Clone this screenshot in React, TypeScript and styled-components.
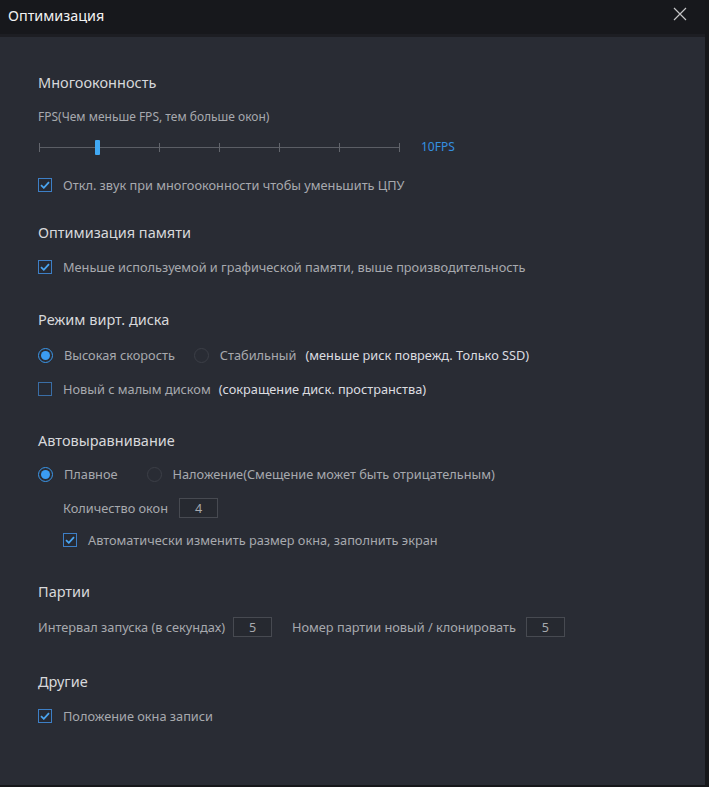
import React from "react";
import styled, { createGlobalStyle } from "styled-components";

const Global = createGlobalStyle`
  html, body { margin: 0; padding: 0; background: #16171a; }
  body { font-family: "Noto Sans", "Open Sans", sans-serif; }
  * { box-sizing: border-box; }
`;

const Window = styled.div`
  width: 705px;
  height: 785px;
  background: #292c34;
  display: flex;
  flex-direction: column;
`;

const TitleBar = styled.div`
  height: 37px;
  flex: none;
  background: #17181c;
  border-bottom: 3px solid #1d1e23;
  display: flex;
  align-items: center;
  justify-content: space-between;
  padding: 0 18px 2px 8px;
`;

const Title = styled.span`
  color: #f2f2f2;
  font-size: 14.4px;
  line-height: 20px;
`;

const CloseBtn = styled.div`
  width: 14px;
  height: 14px;
  display: flex;
  margin-top: -4px;
`;

const Content = styled.div`
  padding: 35px 0 0 38px;
  display: flex;
  flex-direction: column;
`;

const Section = styled.section<{ $top?: number }>`
  margin-top: ${(p) => p.$top ?? 0}px;
  display: flex;
  flex-direction: column;
`;

const Heading = styled.h3`
  margin: 0;
  font-weight: 400;
  font-size: 14.5px;
  line-height: 20px;
  color: #d7d8db;
`;

const Rows = styled.div<{ $gap?: number; $top?: number }>`
  display: flex;
  flex-direction: column;
  gap: ${(p) => p.$gap ?? 14}px;
  margin-top: ${(p) => p.$top ?? 14}px;
`;

const Row = styled.div<{ $indent?: number; $gap?: number }>`
  display: flex;
  align-items: center;
  height: 20px;
  padding-left: ${(p) => p.$indent ?? 0}px;
  gap: ${(p) => p.$gap ?? 0}px;
`;

const Label = styled.span<{ $bright?: boolean; $small?: boolean }>`
  font-size: ${(p) => (p.$small ? 12 : 12.75)}px;
  line-height: 20px;
  color: ${(p) => (p.$bright ? "#dcdde0" : "#a7a9ae")};
  white-space: nowrap;
`;

const Option = styled.label<{ $gap?: number }>`
  display: flex;
  align-items: center;
  gap: 11px;
  margin-right: ${(p) => p.$gap ?? 0}px;
`;

const Box = styled.span<{ $checked?: boolean }>`
  width: 14px;
  height: 14px;
  flex: none;
  border: 1px solid ${(p) => (p.$checked ? "#3d7fc6" : "#3a6ea6")};
  background: #262a33;
  display: flex;
  align-items: center;
  justify-content: center;
`;

const Radio = styled.span<{ $checked?: boolean }>`
  width: 15px;
  height: 15px;
  flex: none;
  border-radius: 50%;
  border: ${(p) => (p.$checked ? "1.5px solid #3a97ea" : "1px solid #3c3f47")};
  display: flex;
  align-items: center;
  justify-content: center;
  &::after {
    content: "";
    width: 9px;
    height: 9px;
    border-radius: 50%;
    background: ${(p) => (p.$checked ? "#3b9cf1" : "transparent")};
  }
`;

const NumBox = styled.span<{ $left?: number; $right?: number }>`
  width: 39px;
  height: 20px;
  flex: none;
  margin-left: ${(p) => p.$left ?? 0}px;
  margin-right: ${(p) => p.$right ?? 0}px;
  border: 1px solid #474a51;
  background: #262930;
  color: #a7a9ae;
  font-size: 12.6px;
  display: flex;
  align-items: center;
  justify-content: center;
`;

const SliderRow = styled.div`
  display: flex;
  align-items: center;
  height: 20px;
  margin-top: 10px;
  gap: 21px;
`;

const Track = styled.div`
  position: relative;
  width: 361px;
  height: 20px;
  margin-left: 1px;
`;

const Line = styled.div`
  position: absolute;
  left: 0;
  right: 0;
  top: 10px;
  height: 1px;
  background: #5b5e65;
`;

const Tick = styled.div`
  position: absolute;
  top: 6px;
  width: 1px;
  height: 9px;
  background: #62656c;
`;

const Thumb = styled.div`
  position: absolute;
  top: 3px;
  left: 56px;
  width: 5px;
  height: 15px;
  border-radius: 1px;
  background: #41a9f4;
`;

const FpsValue = styled.span`
  font-size: 12px;
  color: #3490e0;
  line-height: 20px;
`;

const Check = () => (
  <svg width="10" height="8" viewBox="0 0 10 8">
    <path d="M1 4.2 L3.8 6.8 L9 1.2" fill="none" stroke="#4aa4ef" strokeWidth="1.8" />
  </svg>
);

const CheckOpt = ({ checked, children }: { checked?: boolean; children: React.ReactNode }) => (
  <Option>
    <Box $checked={checked}>{checked && <Check />}</Box>
    {children}
  </Option>
);

export default function App() {
  return (
    <>
      <Global />
      <Window>
        <TitleBar>
          <Title>Оптимизация</Title>
          <CloseBtn>
            <svg width="14" height="14" viewBox="0 0 14 14">
              <path d="M1 1 L13 13 M13 1 L1 13" stroke="#c4c4c6" strokeWidth="1.2" fill="none" />
            </svg>
          </CloseBtn>
        </TitleBar>
        <Content>
          <Section>
            <Heading>Многооконность</Heading>
            <Rows $top={15} $gap={0}>
              <Row>
                <Label $small>FPS(Чем меньше FPS, тем больше окон)</Label>
              </Row>
            </Rows>
            <SliderRow>
              <Track>
                <Line />
                {[0, 60, 120, 180, 240, 300, 360].map((x) => (
                  <Tick key={x} style={{ left: x }} />
                ))}
                <Thumb />
              </Track>
              <FpsValue>10FPS</FpsValue>
            </SliderRow>
            <Rows $top={18}>
              <Row>
                <CheckOpt checked>
                  <Label>Откл. звук при многооконности чтобы уменьшить ЦПУ</Label>
                </CheckOpt>
              </Row>
            </Rows>
          </Section>

          <Section $top={27}>
            <Heading>Оптимизация памяти</Heading>
            <Rows $top={15}>
              <Row>
                <CheckOpt checked>
                  <Label>Меньше используемой и графической памяти, выше производительность</Label>
                </CheckOpt>
              </Row>
            </Rows>
          </Section>

          <Section $top={32}>
            <Heading>Режим вирт. диска</Heading>
            <Rows $top={16}>
              <Row>
                <Option $gap={19}>
                  <Radio $checked />
                  <Label>Высокая скорость</Label>
                </Option>
                <Option $gap={9}>
                  <Radio />
                  <Label>Стабильный</Label>
                </Option>
                <Label $bright>(меньше риск поврежд. Только SSD)</Label>
              </Row>
              <Row>
                <Option $gap={8}>
                  <Box />
                  <Label>Новый с малым диском</Label>
                </Option>
                <Label $bright>(сокращение диск. пространства)</Label>
              </Row>
            </Rows>
          </Section>

          <Section $top={31}>
            <Heading>Автовыравнивание</Heading>
            <Rows>
              <Row>
                <Option $gap={29}>
                  <Radio $checked />
                  <Label>Плавное</Label>
                </Option>
                <Option>
                  <Radio />
                  <Label>Наложение(Смещение может быть отрицательным)</Label>
                </Option>
              </Row>
              <Row $indent={25} $gap={11}>
                <Label>Количество окон</Label>
                <NumBox>4</NumBox>
              </Row>
              <Row $indent={25} style={{ marginTop: -2 }}>
                <CheckOpt checked>
                  <Label>Автоматически изменить размер окна, заполнить экран</Label>
                </CheckOpt>
              </Row>
            </Rows>
          </Section>

          <Section $top={31}>
            <Heading>Партии</Heading>
            <Rows $top={16}>
              <Row>
                <Label>Интервал запуска (в секундах)</Label>
                <NumBox $left={8} $right={20}>5</NumBox>
                <Label>Номер партии новый / клонировать</Label>
                <NumBox $left={10}>5</NumBox>
              </Row>
            </Rows>
          </Section>

          <Section $top={34}>
            <Heading>Другие</Heading>
            <Rows $top={15}>
              <Row>
                <CheckOpt checked>
                  <Label>Положение окна записи</Label>
                </CheckOpt>
              </Row>
            </Rows>
          </Section>
        </Content>
      </Window>
    </>
  );
}
